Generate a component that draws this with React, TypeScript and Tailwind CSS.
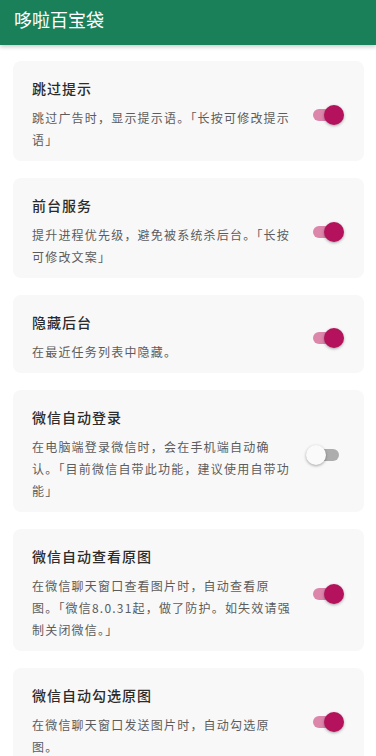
const items = [
  {
    title: "跳过提示",
    lines: ["跳过广告时，显示提示语。「长按可修改提示", "语」"],
    on: true,
  },
  {
    title: "前台服务",
    lines: ["提升进程优先级，避免被系统杀后台。「长按", "可修改文案」"],
    on: true,
  },
  {
    title: "隐藏后台",
    lines: ["在最近任务列表中隐藏。"],
    on: true,
  },
  {
    title: "微信自动登录",
    lines: [
      "在电脑端登录微信时，会在手机端自动确",
      "认。「目前微信自带此功能，建议使用自带功",
      "能」",
    ],
    on: false,
  },
  {
    title: "微信自动查看原图",
    lines: [
      "在微信聊天窗口查看图片时，自动查看原",
      "图。「微信8.0.31起，做了防护。如失效请强",
      "制关闭微信。」",
    ],
    on: true,
  },
  {
    title: "微信自动勾选原图",
    lines: ["在微信聊天窗口发送图片时，自动勾选原", "图。"],
    on: true,
  },
];

const Switch = ({ on }: { on: boolean }) => {
  return (
    <div className="relative w-[38px] h-[20px] shrink-0">
      <div
        className={
          on
            ? "absolute left-[7px] right-[5px] top-[4px] h-[12px] rounded-full bg-[#dc86ab]"
            : "absolute left-[7px] right-[5px] top-[4px] h-[12px] rounded-full bg-[#adadad]"
        }
      />
      {on ? (
        <div className="absolute left-[18px] top-0 w-[20px] h-[20px] rounded-full bg-[#b4125c] shadow-[0_1px_3px_rgba(0,0,0,0.35)]" />
      ) : (
        <div className="absolute left-0 top-0 w-[20px] h-[20px] rounded-full bg-[#fafafa] shadow-[0_1px_3px_rgba(0,0,0,0.35)]" />
      )}
    </div>
  );
};

const App = () => {
  return (
    <div
      className="w-[376px] h-[756px] overflow-hidden bg-white"
      style={{ fontFamily: '"Noto Sans CJK SC", "Noto Sans", sans-serif' }}
    >
      <div className="h-[45px] bg-[#19805a] pl-[14px] pt-[7px] shadow-[0_2px_4px_rgba(0,0,0,0.2)] relative z-10">
        <h1 className="text-white text-[18px] leading-[24px]">哆啦百宝袋</h1>
      </div>

      <div className="flex flex-col gap-[17px] pt-[16px] pl-[13px] pr-[12px]">
        {items.map((item, index) => (
          <div
            key={index}
            className="flex items-center rounded-[8px] bg-[#f8f8f8] pl-[19px] pr-[20px] pt-[17px] pb-[10px]"
          >
            <div className="flex-1 flex flex-col">
              <div className="text-[14px] leading-[20px] font-medium tracking-[1px] text-[#2b2b2b]">
                {item.title}
              </div>
              <div className="mt-[9px] text-[12px] leading-[22px] tracking-[1.2px] text-[#5c5c5c]">
                {item.lines.map((line, i) => (
                  <div key={i} className="whitespace-nowrap">
                    {line}
                  </div>
                ))}
              </div>
            </div>
            <Switch on={item.on} />
          </div>
        ))}
      </div>
    </div>
  );
};

export default App;
